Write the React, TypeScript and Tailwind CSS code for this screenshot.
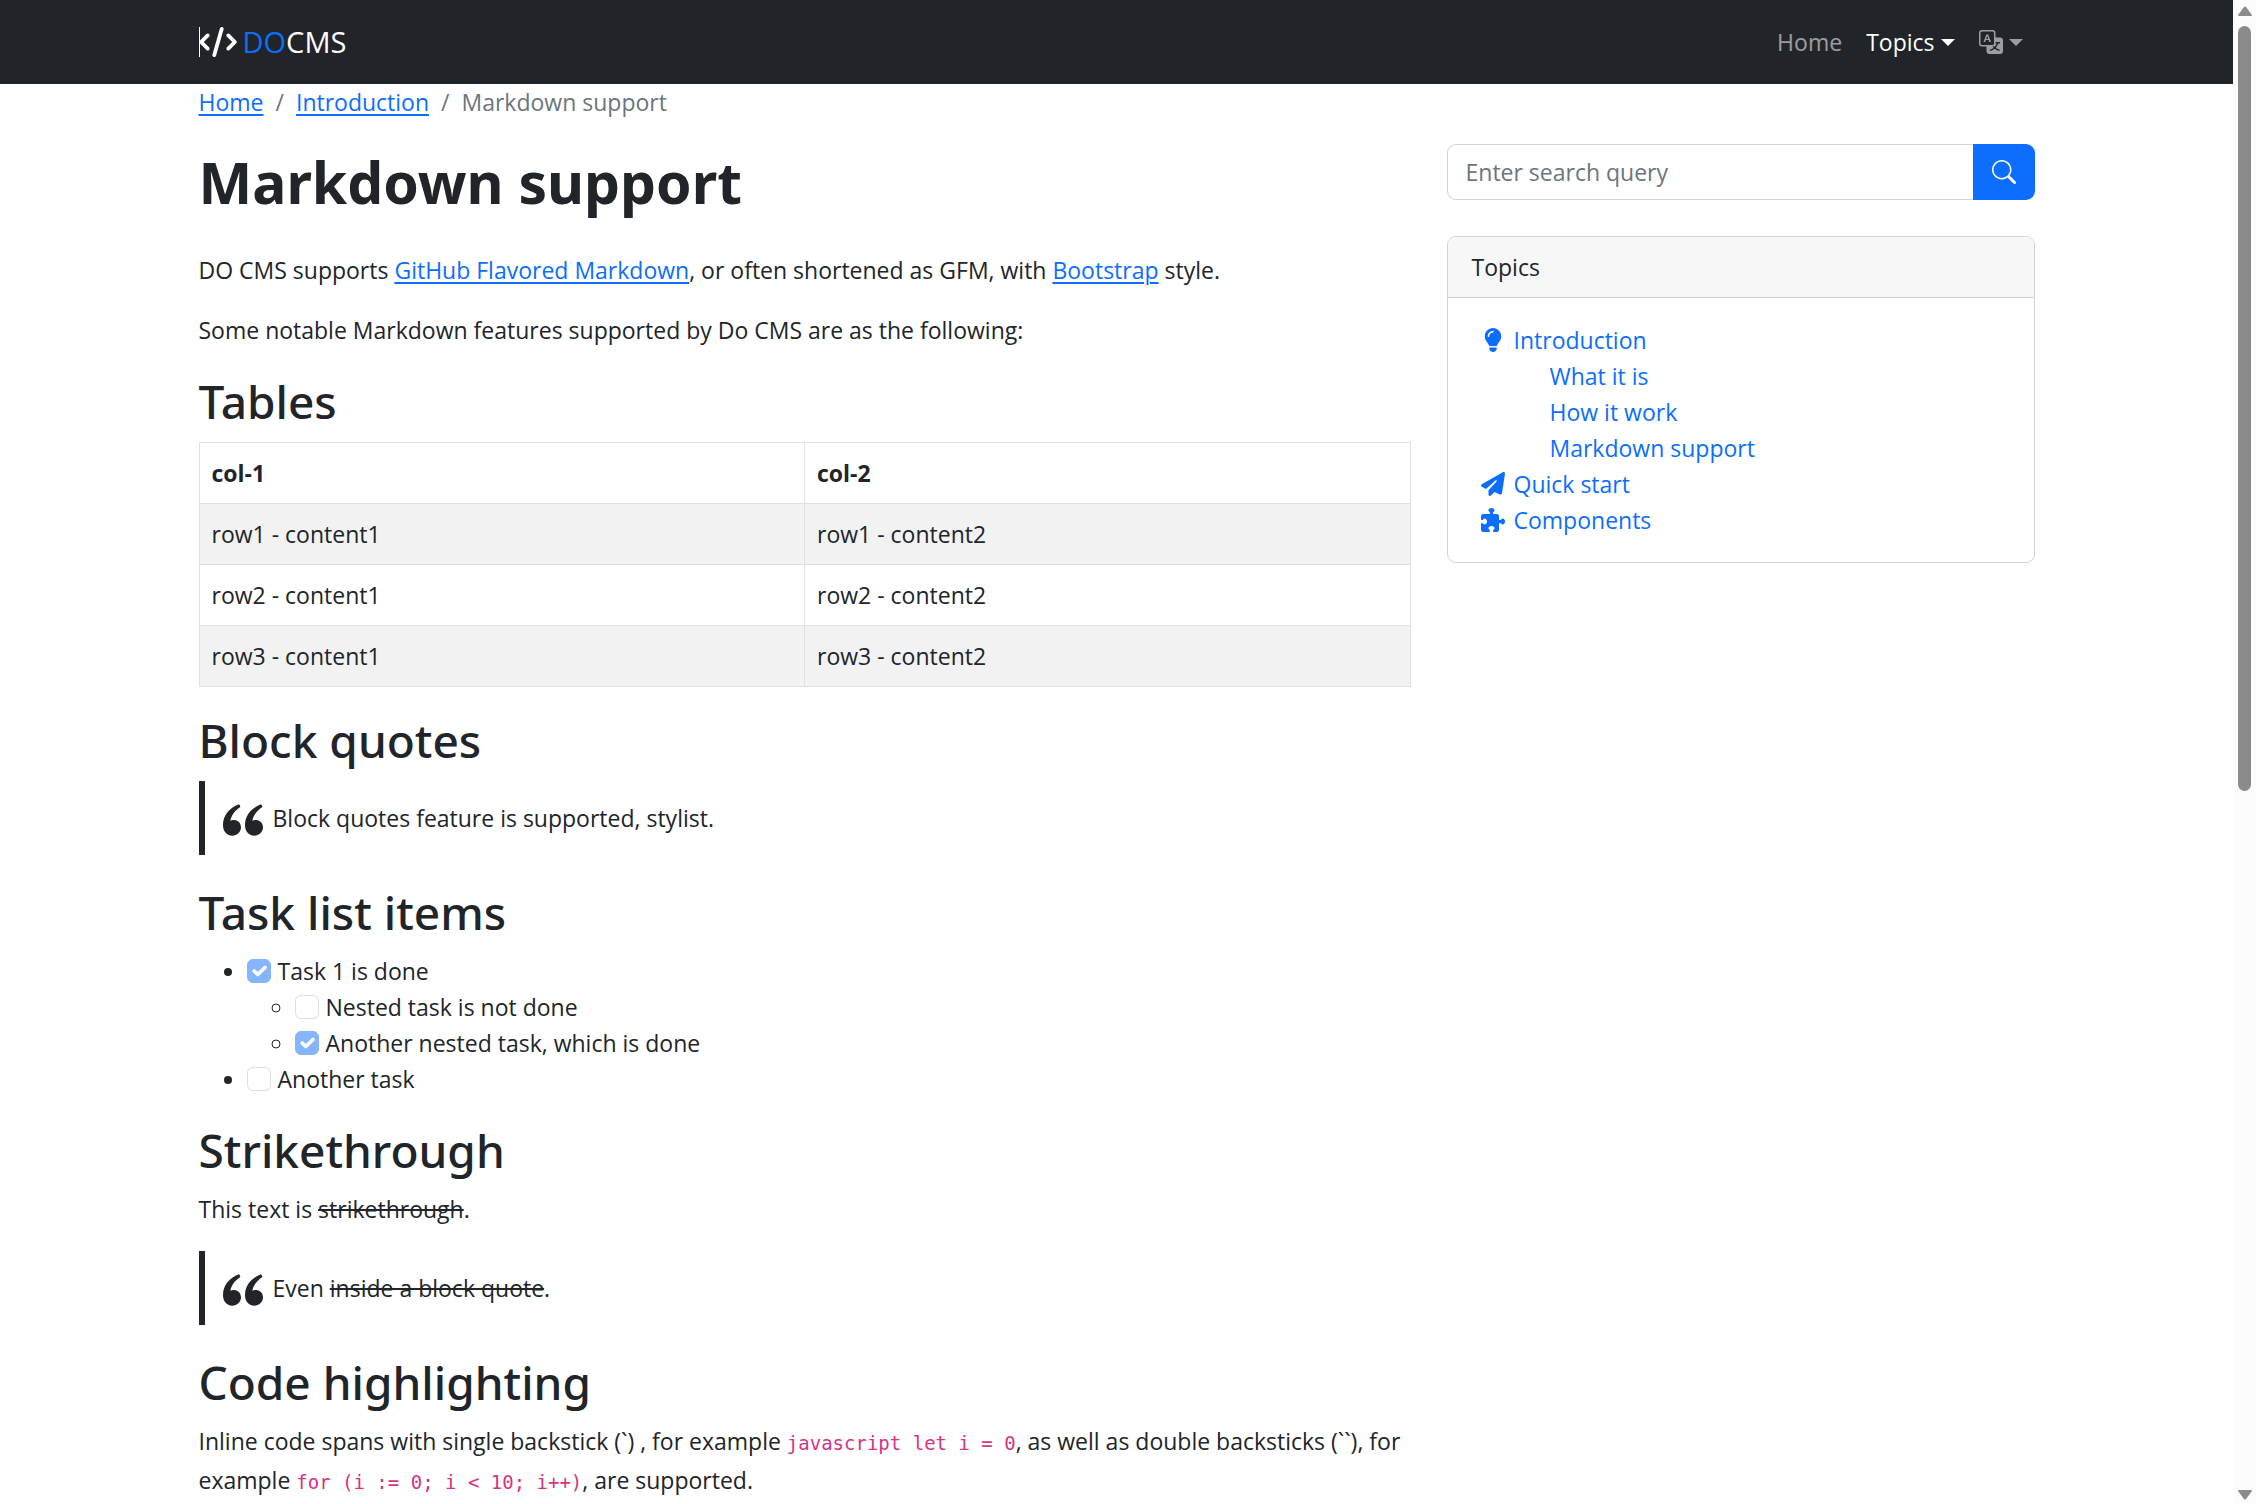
import type { ReactNode } from 'react';
import { FaCode, FaLightbulb, FaPaperPlane, FaPuzzlePiece } from 'react-icons/fa6';
import { BsTranslate, BsSearch } from 'react-icons/bs';

const rows = [1, 2, 3];

function Heading({ children }: { children: ReactNode }) {
  return <h2 className="mb-3 font-['Noto_Sans',sans-serif] text-[46px] leading-[58px] font-medium">{children}</h2>;
}

function TextLink({ children }: { children: ReactNode }) {
  return (
    <a href="#" className="text-[#0d6efd] underline decoration-2 underline-offset-3">
      {children}
    </a>
  );
}

function Caret() {
  return <span className="ml-1.5 h-0 w-0 border-x-[7px] border-t-[7px] border-x-transparent border-t-current" />;
}

function QuoteMark() {
  return (
    <svg viewBox="0 0 120 94" className="mt-1 h-8 w-10 shrink-0" fill="currentColor" aria-hidden="true">
      <path d="M48 0q4 3 4 8C35 19 25 34 22 49q5-3 12-2c12 1 20 10 20 22 0 14-12 25-26 25C10 94 0 80 0 62 0 34 18 11 48 0z" />
      <path d="M114 0q4 3 4 8C101 19 91 34 88 49q5-3 12-2c12 1 20 10 20 22 0 14-12 25-26 25-18 0-28-14-28-32 0-28 18-51 48-62z" />
    </svg>
  );
}

function Quote({ children }: { children: ReactNode }) {
  return (
    <blockquote className="mb-7 flex items-center gap-2.5 border-l-6 border-[#212529] py-[19px] pl-[18px]">
      <QuoteMark />
      <p>{children}</p>
    </blockquote>
  );
}

function Task({ label, done = false }: { label: string; done?: boolean }) {
  return (
    <label>
      <span className="relative mt-1.5 mr-[7px] inline-block size-6 align-top opacity-50">
        <input
          type="checkbox"
          disabled
          defaultChecked={done}
          className="block size-6 appearance-none rounded-md border border-black/25 bg-white checked:border-[#0d6efd] checked:bg-[#0d6efd]"
        />
        {done && (
          <svg viewBox="0 0 20 20" className="absolute inset-0 size-6" fill="none" aria-hidden="true">
            <path d="m6 10 3 3 6-6" stroke="#fff" strokeWidth="3" strokeLinecap="round" strokeLinejoin="round" />
          </svg>
        )}
      </span>
      {label}
    </label>
  );
}

function Topic({ icon, label, children }: { icon: ReactNode; label: string; children?: ReactNode }) {
  return (
    <li>
      <a href="#" className="flex items-center gap-1.5">
        <span className="flex w-[30px] justify-center text-2xl">{icon}</span>
        {label}
      </a>
      {children}
    </li>
  );
}

function Code({ children }: { children: ReactNode }) {
  return <code className="font-['DejaVu_Sans_Mono',monospace] text-[19px] text-[#d63384]">{children}</code>;
}

export default function App() {
  return (
    <div className="flex h-screen overflow-hidden bg-white font-['Open_Sans',sans-serif] text-[23px] leading-9 text-[#212529]">
      <div className="min-w-0 flex-1">
        <header className="bg-[#212529]">
          <div className="mx-auto flex h-21 w-full max-w-[1836px] items-center justify-between">
            <a href="#" className="flex items-center gap-1.5 text-[29px] text-white">
              <span className="flex border-l border-white">
                <FaCode className="-ml-px h-[30px] w-[38px]" />
              </span>
              <span>
                <span className="text-[#0d6efd]">DO</span>CMS
              </span>
            </a>
            <nav className="flex items-center gap-6 pr-3 text-white/55">
              <a href="#">Home</a>
              <button type="button" className="flex items-center text-white">
                Topics
                <Caret />
              </button>
              <button type="button" aria-label="Language" className="flex items-center">
                <BsTranslate className="size-6" />
                <Caret />
              </button>
            </nav>
          </div>
        </header>

        <div className="mx-auto w-full max-w-[1836px]">
          <nav aria-label="Breadcrumb" className="mb-6">
            <ol className="flex gap-3 text-[#6c757d]">
              <li>
                <TextLink>Home</TextLink>
              </li>
              <li aria-hidden="true">/</li>
              <li>
                <TextLink>Introduction</TextLink>
              </li>
              <li aria-hidden="true">/</li>
              <li aria-current="page">Markdown support</li>
            </ol>
          </nav>

          <div className="flex gap-9">
            <main className="min-w-0 flex-1">
              <h1 className="mb-8 font-['Noto_Sans',sans-serif] text-[57px] leading-[76px] font-bold">
                Markdown support
              </h1>
              <p className="mb-6">
                DO CMS supports <TextLink>GitHub Flavored Markdown</TextLink>, or often shortened as GFM, with{' '}
                <TextLink>Bootstrap</TextLink> style.
              </p>
              <p className="mb-6">Some notable Markdown features supported by Do CMS are as the following:</p>

              <Heading>Tables</Heading>
              <table className="mb-6 w-full table-fixed border-collapse text-left">
                <thead>
                  <tr>
                    <th className="border border-[#dee2e6] p-3 font-bold">col-1</th>
                    <th className="border border-[#dee2e6] p-3 font-bold">col-2</th>
                  </tr>
                </thead>
                <tbody>
                  {rows.map((n) => (
                    <tr key={n} className="odd:bg-[#f2f2f2]">
                      <td className="border border-[#dee2e6] p-3">row{n} - content1</td>
                      <td className="border border-[#dee2e6] p-3">row{n} - content2</td>
                    </tr>
                  ))}
                </tbody>
              </table>

              <Heading>Block quotes</Heading>
              <Quote>Block quotes feature is supported, stylist.</Quote>

              <Heading>Task list items</Heading>
              <ul className="mb-6 list-disc pl-12">
                <li>
                  <Task label="Task 1 is done" done />
                  <ul className="list-[circle] pl-12">
                    <li>
                      <Task label="Nested task is not done" />
                    </li>
                    <li>
                      <Task label="Another nested task, which is done" done />
                    </li>
                  </ul>
                </li>
                <li>
                  <Task label="Another task" />
                </li>
              </ul>

              <Heading>Strikethrough</Heading>
              <p className="mb-6">
                This text is <del className="decoration-2">strikethrough</del>.
              </p>
              <Quote>
                Even <del className="decoration-2">inside a block quote</del>.
              </Quote>

              <Heading>Code highlighting</Heading>
              <p className="leading-[37px]">
                Inline code spans with single backstick (`) , for example <Code>javascript let i = 0</Code>, as well as
                double backsticks (``), for example <Code>for (i := 0; i &lt; 10; i++)</Code>, are supported.
              </p>
            </main>

            <aside className="w-[588px] shrink-0">
              <form role="search" className="mb-9 flex h-14">
                <input
                  type="search"
                  aria-label="Search query"
                  placeholder="Enter search query"
                  className="min-w-0 flex-1 rounded-l-[9px] border border-r-0 border-[#ced4da] px-[18px] placeholder:text-[#6c757d] placeholder:opacity-100"
                />
                <button
                  type="button"
                  aria-label="Search"
                  className="flex w-[62px] items-center justify-center rounded-r-[9px] bg-[#0d6efd] text-white"
                >
                  <BsSearch className="size-6" />
                </button>
              </form>

              <section className="overflow-hidden rounded-[9px] border border-[#d2d2d2]">
                <h3 className="border-b border-[#d2d2d2] bg-[#f7f7f7] px-6 py-3">Topics</h3>
                <ul className="p-6 pl-[30px] text-[#0d6efd]">
                  <Topic icon={<FaLightbulb />} label="Introduction">
                    <ul className="pl-[72px]">
                      <li>
                        <a href="#">What it is</a>
                      </li>
                      <li>
                        <a href="#">How it work</a>
                      </li>
                      <li>
                        <a href="#">Markdown support</a>
                      </li>
                    </ul>
                  </Topic>
                  <Topic icon={<FaPaperPlane />} label="Quick start" />
                  <Topic icon={<FaPuzzlePiece />} label="Components" />
                </ul>
              </section>
            </aside>
          </div>
        </div>
      </div>

      <div className="flex w-[23px] shrink-0 flex-col items-center bg-[#fcfcfc] pt-1.5 pb-1 text-[#8b8b8b]" aria-hidden="true">
        <svg viewBox="0 0 14 10" className="mb-2.5 h-2.5 w-3.5 shrink-0" fill="currentColor">
          <path d="M6 1q1-1 2 0l6 8q0 1-1 1H1q-1 0-1-1z" />
        </svg>
        <div className="min-h-0 w-[13px] flex-[763] rounded-full bg-current" />
        <div className="flex-[698]" />
        <svg viewBox="0 0 14 10" className="h-2.5 w-3.5 shrink-0" fill="currentColor">
          <path d="M6 9q1 1 2 0l6-8q0-1-1-1H1Q0 0 0 1z" />
        </svg>
      </div>
    </div>
  );
}
